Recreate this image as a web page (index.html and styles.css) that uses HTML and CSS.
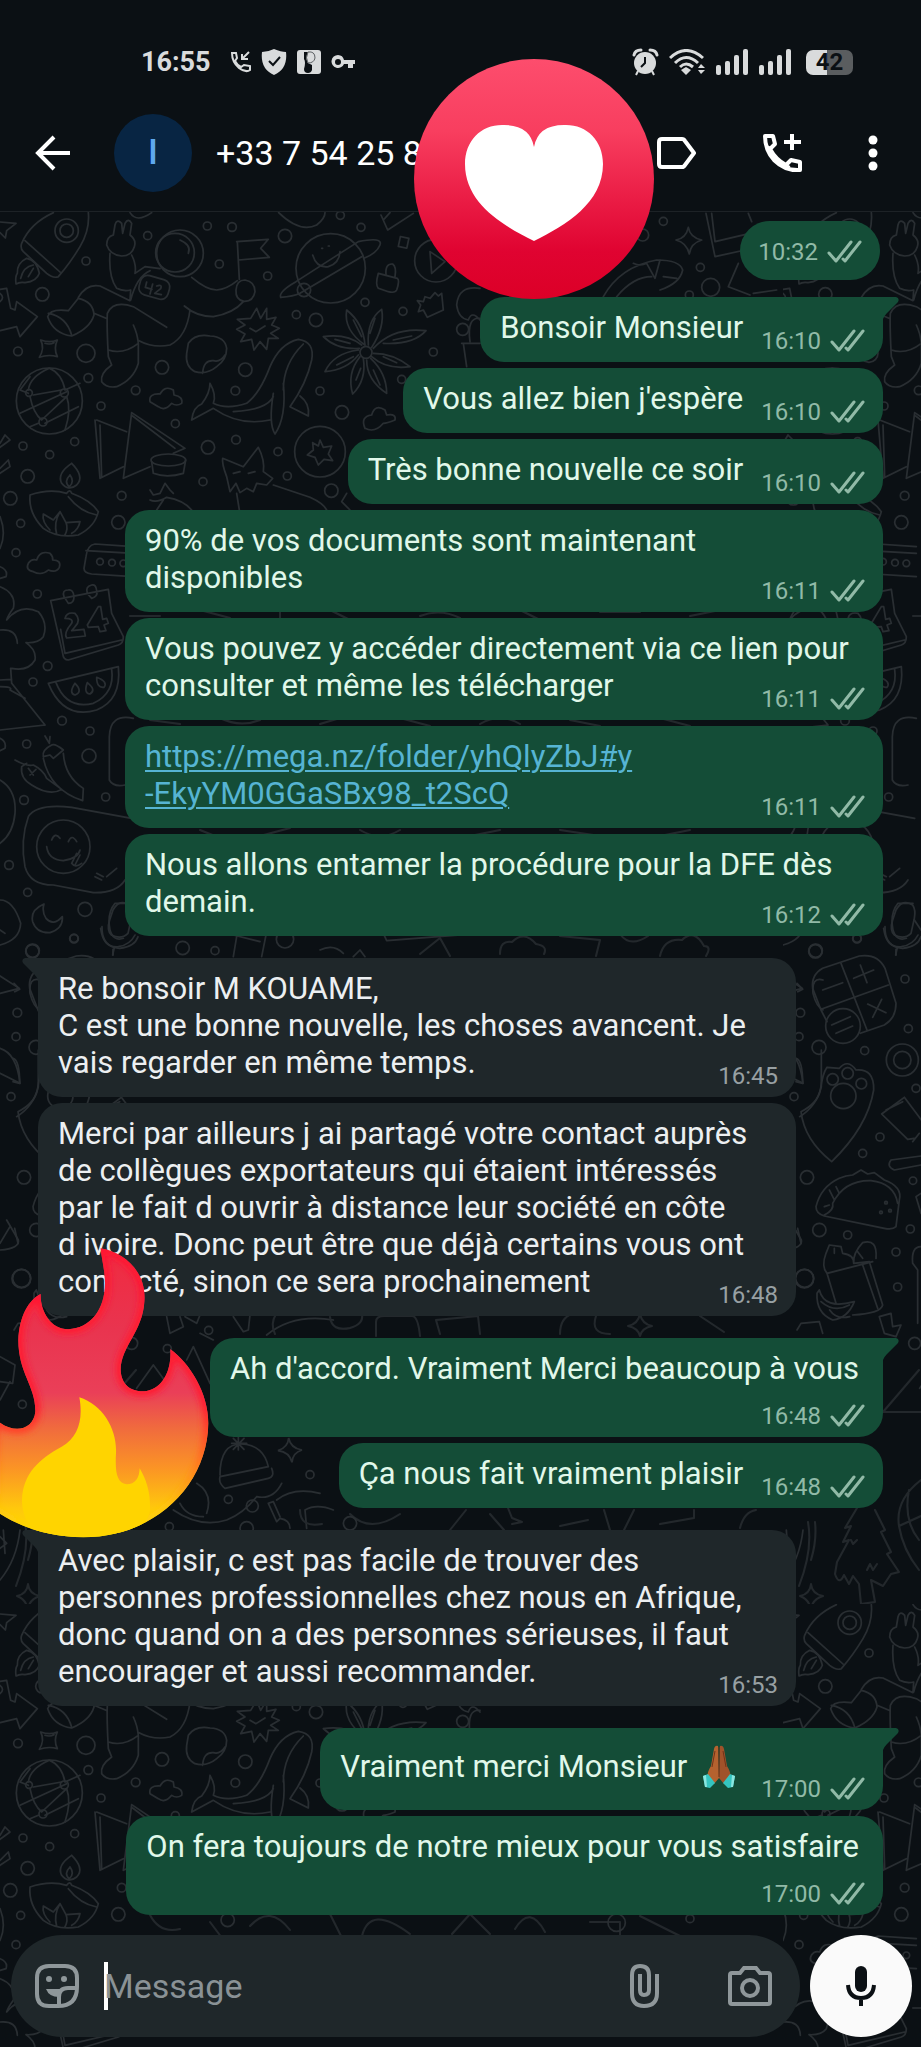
FILE: index.html
```html
<!DOCTYPE html>
<html lang="fr">
<head>
<meta charset="utf-8">
<meta name="viewport" content="width=device-width, initial-scale=1">
<title>Discussion</title>
<link rel="stylesheet" href="styles.css">
</head>
<body>
<svg class="defs" aria-hidden="true">
  <symbol id="ticks" viewBox="0 0 35 24"><path d="M2 13 9 21 24 2M16 19 18 21 33 2" fill="none" stroke="currentColor" stroke-width="3" stroke-linecap="round" stroke-linejoin="round"/></symbol>
  <symbol id="tail" viewBox="0 0 16 22"><path d="M0 0H13Q17 1 15 5L4 16Q1 19 0 22Z" fill="currentColor"/></symbol>
</svg>

<div class="statusbar">
  <div class="status-group status-left">
    <span class="clock">16:55</span>
    <svg width="20" height="22" viewBox="0 0 20 22" fill="none" stroke="currentColor" stroke-width="2"><path d="M1 2H5L6 7 4 10Q6 14 10 16L13 14 19 15V19Q15 22 8 17 1 11 1 2ZM18 1 11 8M11 3V8H17"/></svg>
    <svg width="26" height="26" viewBox="0 0 26 26"><path d="M13 0Q20 3 25 3Q27 20 13 26Q-1 20 1 3Q7 3 13 0Z" fill="currentColor"/><path d="M8 12 12 16 19 8" fill="none" stroke="#0b1014" stroke-width="2"/></svg>
    <svg width="24" height="24" viewBox="0 0 24 24"><rect width="24" height="24" rx="3" fill="currentColor"/><path d="M7 2H12Q8 8 11 13L15 15V20Q14 23 11 23 7 23 7 19 9 12 7 9Z" fill="#0b1014"/><path d="M11 2Q18 1 18 8 17 13 11 13Q8 8 11 2Z" fill="currentColor" stroke="#5c6063" stroke-width="1"/></svg>
    <svg width="24" height="16" viewBox="0 0 24 16"><path fill="currentColor" fill-rule="evenodd" d="M7 1A6.500 6.500 0 1 0 13 10H17V14H22V10H24V6H13A6.500 6.500 0 0 0 7 1ZM7 5A3 3 0 1 1 7 11 3 3 0 1 1 7 5Z"/></svg>
  </div>
  <div class="status-group status-right">
    <svg width="27" height="28" viewBox="0 0 27 28"><path d="M2 7Q3 2 9 2M18 2Q24 2 25 7" fill="none" stroke="currentColor" stroke-width="3" stroke-linecap="round"/><circle cx="13" cy="15" r="11" fill="currentColor"/><path d="M13 9V15L9 19" fill="none" stroke="#0b1014" stroke-width="2"/><path d="M6 23 4 27M20 23 22 27" stroke="currentColor" stroke-width="2"/></svg>
    <svg width="37" height="26" viewBox="0 0 37 26" fill="none" stroke="currentColor" stroke-width="3"><path d="M1 9Q17-6 34 9M6 14Q17 3 29 14M11 18Q17 12 24 18"/><path d="M17 18 22 21 17 26 12 21Z" fill="currentColor" stroke="none"/><path d="M32 15 36 19H29ZM32 25 29 21H36Z" fill="currentColor" stroke="none"/></svg>
    <svg width="33" height="26" viewBox="0 0 33 26" fill="currentColor"><rect y="16" width="5" height="10" rx="2"/><rect x="9" y="12" width="5" height="14" rx="2"/><rect x="18" y="6" width="5" height="20" rx="2"/><rect x="27" width="5" height="26" rx="2"/></svg>
    <svg width="33" height="26" viewBox="0 0 33 26" fill="currentColor"><rect y="16" width="5" height="10" rx="2"/><rect x="9" y="12" width="5" height="14" rx="2"/><rect x="18" y="6" width="5" height="20" rx="2"/><rect x="27" width="5" height="26" rx="2"/></svg>
    <span class="battery">42</span>
  </div>
</div>

<header class="topbar">
  <button class="icon-btn" aria-label="Retour"><svg width="36" height="36" viewBox="0 0 36 36" fill="none" stroke="currentColor" stroke-width="4"><path d="M19 2 3 18 19 34M3 18H35"/></svg></button>
  <span class="avatar">I</span>
  <h1 class="contact">+33 7 54 25 8</h1>
  <div class="actions">
    <button class="icon-btn" aria-label="Étiquette"><svg width="39" height="32" viewBox="0 0 39 32"><path d="M5 2H25Q27 2 28 4L37 16 28 28Q27 30 25 30H5Q2 30 2 27V5Q2 2 5 2Z" fill="none" stroke="currentColor" stroke-width="4" stroke-linejoin="round"/></svg></button>
    <button class="icon-btn" aria-label="Appeler"><svg width="42" height="42" viewBox="0 0 42 42" fill="none" stroke="currentColor" stroke-width="4"><path d="M4 4H12L14 12 9 17Q15 28 25 33L30 28 39 30V38Q24 39 13 28 4 18 4 4ZM9 17 6 15M25 33 28 36" stroke-linejoin="round"/><path d="M31 2V18M23 10H40"/></svg></button>
    <button class="icon-btn" aria-label="Plus d'options"><svg width="10" height="36" viewBox="0 0 10 36" fill="currentColor"><circle cx="5" cy="5" r="4.500"/><circle cx="5" cy="18" r="4.500"/><circle cx="5" cy="31" r="4.500"/></svg></button>
  </div>
</header>

<svg class="heart" viewBox="0 0 240 240" role="img" aria-label="Cœur">
  <defs><linearGradient id="heartFill" x1="0" y1="0" x2="0" y2="1"><stop offset="0" stop-color="#fd4d6d"/><stop offset=".3" stop-color="#f83e5f"/><stop offset=".8" stop-color="#e00331"/><stop offset="1" stop-color="#dc0027"/></linearGradient></defs>
  <circle cx="120" cy="120" r="120" fill="url(#heartFill)"/>
  <path d="M120 88Q116 66 90 66C68 65 51 81 51 105C51 144 88 166 120 182C152 166 189 144 189 105C189 81 172 65 150 66Q124 66 120 88Z" fill="#fff"/>
</svg>

<main class="chat">
  <svg class="wallpaper" aria-hidden="true">
    <defs>
      <pattern id="doodles" width="783" height="1392" patternUnits="userSpaceOnUse">
        <g fill="none" stroke="#292e32" stroke-width="5" stroke-linejoin="round" stroke-linecap="round">
          <g transform="translate(0 -2) scale(.33333)">
            <path d="M0 36 48 40 20 62 16 84 0 68"/>
            <path d="M65 100Q90 40 160 8M265 8Q270 60 240 110 210 160 175 200Q160 206 140 190L70 125Q60 115 65 100M75 92 180 186"/>
            <circle cx="200" cy="62" r="35"/><circle cx="200" cy="62" r="20"/>
            <path d="M80 145Q50 160 52 190 45 200 48 222 60 215 75 218 110 215 118 190M80 145Q110 150 118 190M62 205Q70 170 100 165M85 200 100 175"/>
            <path d="M320 105Q320 80 340 75L345 45Q350 25 365 40L368 70 375 40Q385 22 395 40L390 75Q410 90 403 110 395 138 365 138 330 135 320 105M330 130Q325 200 350 235 370 245 392 240L390 272 300 228Q260 220 235 262M395 135Q410 165 405 190L435 170 480 176M392 270Q410 200 450 182M390 8Q410 40 455 8"/>
            <circle cx="540" cy="130" r="70"/><circle cx="525" cy="128" r="58"/><path d="M540 90Q575 105 565 130"/>
            <rect x="418" y="202" width="90" height="60" rx="22" transform="rotate(16 463 232)"/>
            <path d="M440 216 436 232 456 238M458 222 450 252M470 228Q488 222 482 236L464 250 484 254"/>
            <path d="M575 202Q620 240 650 240 680 238 712 212M712 95 718 208M710 95 805 88 782 115 808 142 716 150M708 240Q710 210 735 210 765 215 765 245 760 275 732 274 706 270 708 240M553 288Q590 320 640 320 700 310 730 275M570 300Q560 380 510 405 460 415 417 392M143 320Q150 295 205 302L235 265Q280 275 282 315 270 355 215 378 160 370 143 320M145 310Q200 320 215 376M282 310 318 325M500 352 400 290Q340 270 322 310 320 350 325 440L335 465Q300 490 305 515 320 535 350 530 400 510 415 460V400Q412 370 400 345M325 420Q370 435 415 400"/>
            <path d="M0 238 20 235 32 295 45 300 50 275 112 320 60 380 50 350 0 362M0 250Q15 262 0 275"/>
            <path d="M122 390Q150 400 172 390 160 415 172 440 145 432 118 442 135 415 122 390M135 400Q150 405 162 398"/>
            <circle cx="148" cy="573" r="99"/>
            <path d="M90 500 60 540 85 550M100 555 185 540M148 475Q185 490 195 540L240 520M90 560Q100 610 125 630L200 560M60 610 200 545M148 475Q90 500 85 540M135 640 235 590M200 560Q215 600 195 660M115 640 90 650"/>
            <circle cx="87" cy="549" r="10"/><circle cx="193" cy="549" r="12"/><circle cx="129" cy="636" r="12"/>
            <path d="M285 630 300 805 370 770M290 630 380 665M300 645 305 800M395 608 370 805 450 770M395 608 555 715 520 730M398 618 525 715"/>
            <ellipse cx="505" cy="750" rx="52" ry="18"/><path d="M455 755 460 790Q500 805 550 790L557 750"/>
            <path d="M215 760Q170 790 185 820 205 845 230 825 255 800 215 760M210 795Q190 815 208 830 225 815 210 795M90 855Q150 835 200 850 210 835 215 850 270 870 295 905 285 950 235 975 170 985 130 955 85 910 90 855M205 860Q240 905 290 915M150 960Q125 935 130 912L160 930 180 905 198 938 240 935Q235 960 215 970M180 905Q160 940 170 972M198 938Q205 955 195 975"/>
            <path d="M100 1085Q75 1080 85 1060 95 1045 110 1050 120 1020 150 1030 160 1040 158 1050 185 1050 178 1072 168 1090 145 1080 125 1098 100 1085"/>
            <path d="M400 1010 285 1002Q262 1005 258 1040L252 1075Q252 1090 275 1092L400 1100M258 1022 400 1030"/><circle cx="300" cy="1055" r="10"/><circle cx="336" cy="1058" r="10"/><circle cx="370" cy="1060" r="10"/>
            <path d="M152 1172 325 1138 335 1210 370 1280 Q370 1300 355 1305L205 1350Q190 1350 188 1330L152 1172M182 1258 195 1330 365 1290M205 1140Q185 1140 192 1160L205 1180Q222 1180 222 1160 220 1138 205 1140M275 1125Q255 1130 262 1150L275 1165Q295 1160 290 1142 288 1122 275 1125"/>
            <path d="M195 1225Q200 1205 225 1210 245 1230 225 1250L215 1262 252 1258 256 1278 200 1284Q190 1270 215 1240 222 1225 195 1225M295 1190 262 1245 265 1252 295 1250 300 1265 318 1262 312 1245 325 1240 320 1225 308 1228 302 1190Z"/>
            <path d="M145 1420 355 1370Q365 1470 290 1500 190 1530 145 1420M168 1418Q200 1500 280 1480 345 1450 335 1378M225 1420Q205 1450 225 1455 250 1445 225 1420M262 1418Q250 1450 270 1452 290 1440 262 1418M290 1402Q290 1435 312 1432 325 1415 290 1402"/>
            <path d="M0 1130Q50 1150 40 1195 25 1215 20 1230 60 1180 115 1205 145 1240 130 1280 115 1300 78 1298 110 1320 105 1350 85 1385 35 1375M0 1260Q50 1255 52 1300M32 1375 35 1420 135 1545M0 1560 135 1545M0 1410 35 1408M0 1430Q40 1430 30 1440L75 1465M0 920Q20 970 0 1015M0 775 25 750 30 770 0 790M0 700 15 675 30 690 0 712M0 1070Q25 1080 18 1100L0 1105"/>
            <path d="M565 400Q585 370 630 378 675 380 680 415 680 450 650 470 620 495 585 485 555 470 560 430ZM608 490Q610 450 640 452 660 458 675 435"/>
            <path d="M752 325 770 295 782 325 800 295 800 328 828 322 815 345 838 355 812 370 835 385 805 385 800 418 780 395 762 420 755 388 722 395 735 372 710 358 735 345 712 328ZM750 355 768 365 795 348"/>
            <path d="M630 520Q650 555 640 580 680 600 740 580 780 550 810 470 840 400 895 388 945 395 935 450 920 520 870 590M575 630Q580 590 605 582 630 550 630 520M575 630 640 595M640 595Q720 650 810 630M910 402Q850 460 850 540M820 550Q805 640 825 672 860 620 850 520M870 590 925 618Q930 580 900 558M820 560Q800 600 700 605"/>
            <path d="M450 575Q445 550 480 552 495 525 520 540L522 555Q550 560 545 580 530 590 515 580 495 605 475 590Z"/>
            <circle cx="992" cy="175" r="104"/><path d="M842 262Q835 245 888 215L1075 95Q1150 80 1140 105 1130 130 1092 145M842 262Q880 260 900 250L1085 140M938 135Q950 175 985 170 1018 160 1020 125M965 115H968M985 108H988"/><circle cx="912" cy="240" r="20"/>
            <path d="M836 8Q900 70 950 45 975 25 975 8M1143 15 1163 60 1240 10M1150 30 1170 8"/>
            <rect x="1198" y="82" width="26" height="30" transform="rotate(12 1210 96)"/>
            <path d="M1135 190 1192 205Q1200 210 1190 240 1185 250 1165 245L1135 235Q1125 225 1135 190M1158 195Q1155 160 1178 162 1190 170 1185 200"/>
            <circle cx="1308" cy="152" r="64"/><path d="M1290 125 1335 155 1295 190Z"/>
            <path d="M1275 260 1290 265 1305 248 1315 258 1325 250 1330 300 1282 322 1270 300 1255 305 1262 285 1252 272 1270 275ZM1440 235Q1375 225 1370 285 1375 325 1405 330 1415 300 1440 330M1440 325Q1400 320 1410 395M1385 400H1440M1390 400 1400 470"/><circle cx="1388" cy="358" r="18"/>
            <path d="M1095 405Q1030 360 1040 300 1090 340 1095 405M1105 405Q1100 330 1145 298 1155 350 1115 412M1120 415Q1180 350 1278 362 1240 405 1150 400M1120 430Q1180 430 1230 470 1160 480 1115 440M1112 445Q1160 490 1160 550 1100 510 1100 450M1090 445Q1100 510 1058 552 1040 490 1080 440M1075 435Q1040 480 975 485 1000 430 1075 420M1078 415Q1010 420 970 380 1040 370 1085 405M1060 330 1085 380M1125 325 1110 370M1180 390 1235 378M1150 440 1190 458M1120 480 1140 525M1082 475 1068 510M1060 440 1010 465M1050 400 1005 388"/><circle cx="1098" cy="427" r="18"/>
            <circle cx="960" cy="725" r="76"/><path d="M960 690 970 712 995 708 985 732 998 752 972 748 955 765 945 742 922 735 940 720 938 698 955 708Z"/>
            <path d="M1095 655Q1080 620 1115 615 1125 580 1155 600L1160 615Q1190 610 1185 630 1160 640 1150 640 1125 670 1095 655"/>
            <path d="M690 845 680 800Q665 760 668 745L730 770 775 712Q795 750 790 785L818 805 800 825 770 820 760 845 740 835 720 848 708 820ZM710 850 718 900M820 825 930 862Q970 880 980 900M700 790 720 785M745 790 765 785"/>
            <path d="M450 840 460 855 480 850 495 820 510 840 520 850M450 870Q470 880 500 862 550 870 575 900M490 870 470 900M1040 850 1025 875 1050 900"/>
          </g>
          <g transform="translate(0 488) scale(.33333)">
            <path d="M400 55Q330 40 328 110V240Q340 262 375 255M150 110 148 130 135 108M155 135Q125 150 130 170L150 165 160 175 190 150Q165 130 155 135M190 160Q195 230 250 265L248 302Q150 270 130 175M45 180Q80 200 100 195 130 210 140 235L185 268Q150 290 95 255 60 235 65 200L80 190M85 205 100 225M90 225 108 208"/>
            <path d="M0 240Q50 270 45 340 40 400 0 430M0 115Q20 125 15 145L0 152"/>
            <path d="M395 355 215 322Q110 310 85 350 60 420 75 500 90 555 160 555L280 578Q350 580 375 540M285 530 305 540M290 520 310 530M320 530 350 505"/>
            <circle cx="190" cy="440" r="80"/><path d="M155 420Q165 395 180 415M205 425Q215 400 230 425M140 440Q145 480 190 482 235 475 240 450M215 490 230 460M225 495 240 465M215 490Q225 505 245 490"/>
            <path d="M132 612Q90 630 98 665 110 700 150 698 190 685 187 650 160 680 138 655 125 635 132 612M330 690Q320 640 345 610H390M330 690Q340 725 370 715M302 685Q310 745 355 740 390 735 405 705M343 742 338 765M0 600Q40 600 62 670 60 720 0 735M0 690 15 700M700 705 780 725M710 710 700 770M798 705 785 770M960 750Q1000 730 1030 760M660 705H720M1060 770 1080 750 1095 770M1150 700 1160 722 1440 700"/>
            <path d="M0 828 58 865 0 880M0 1045Q50 1060 60 1150L0 1120M115 1050V1160Q100 1220 50 1250M120 840Q85 830 90 880 100 920 120 930"/>
          </g>
          <g transform="translate(-2 688) scale(.33333)">
            <path d="M312 80Q310 140 365 145 410 140 420 110M345 30Q365-5 395 15 405 30 400 55L390 100Q370 120 340 105 325 90 335 60ZM345 148V165"/>
            <path d="M125 205 235 168Q290 160 312 205L345 310Q345 355 310 375L238 400M125 205Q90 225 95 265L120 330 138 365M180 190 258 390M120 328 322 255M125 270 185 248M218 235 278 210M238 195 258 248M260 312 315 338M302 298 275 352M152 375 208 350M165 400 215 378"/><circle cx="186" cy="378" r="52"/>
            <path d="M118 570Q125 520 138 502L175 505Q200 475 225 510 280 505 278 570 260 680 152 785 70 720 60 635 110 610 118 570"/><circle cx="187" cy="588" r="38"/><circle cx="155" cy="538" r="17"/><circle cx="200" cy="520" r="17"/><circle cx="241" cy="551" r="16"/>
            <circle cx="364" cy="480" r="48"/><circle cx="364" cy="480" r="26"/><path d="M370 592 302 642 380 718 400 715M370 592 425 665M315 630 365 605M395 725 415 700M420 768 330 780Q315 800 340 810L420 795"/>
            <path d="M105 920Q120 860 175 835L195 828 215 825 240 810 260 822 280 818 310 840Q365 860 355 900L345 980Q335 990 310 985L130 948Q105 940 105 920M130 945Q160 930 155 910 190 840 270 842 340 850 350 910M145 870 160 900M165 860 175 880M130 920 145 915"/><circle cx="315" cy="908" r="4"/><circle cx="300" cy="937" r="4"/><circle cx="327" cy="932" r="4"/>
            <path d="M135 1060 145 1035 180 1040 185 1060Q220 1065 218 1090L265 1085 305 1215Q300 1240 215 1245M135 1060Q120 1100 138 1120L275 1085M138 1120 165 1210M245 1095 290 1225M218 1090Q215 1060 245 1028 290 1015 285 1075M115 1170Q130 1230 220 1205 200 1255 155 1260 105 1240 108 1180ZM120 1205Q160 1240 205 1215M230 1055 245 1075M160 1045V1060"/>
            <path d="M400 60 420 90M420 880 405 890 420 940M420 1040Q390 1040 395 1090L410 1110M410 1110V1270M48 1290 60 1270 115 1265 125 1300M295 1250 330 1240 335 1280 360 1275 345 1310 310 1300ZM45 475Q65 480 65 550L45 545M48 250 65 268 50 275M50 985 60 1030"/>
          </g>
          <g transform="translate(0 1008) scale(.33333)">
            <path d="M20 0 55 60Q60 85 0 90M0 70 30 20M0 410 45 435 38 490 0 485M0 540 30 485M140 270Q160 300 200 290M500 290 510 340 550 320 540 290M555 290 590 310 600 285M700 290 730 335 745 330 750 285M800 345Q880 280 1000 300M410 505 460 435 500 490M560 420 580 380 630 490M600 340 640 360M660 765Q660 670 725 672 790 675 805 740L660 770Q655 790 675 805L805 775Q825 770 815 745M520 870Q600 925 680 900 730 880 770 830 820 840 845 790M540 850Q560 890 610 890M590 790Q640 820 620 880M805 850 830 905M805 850 820 845 840 890M830 905 840 895Q870 900 870 925M830 840Q880 800 960 820M920 925 915 870Q950 850 1000 870"/>
            <path d="M715 650V690M695 670H740M700 655 732 688M700 688 732 655"/>
            <path d="M0 950 20 970 0 985M10 930 15 1000M60 930Q50 1020 0 1080"/>
          </g>
          <g transform="translate(460 -212) scale(.33333)">
            <path d="M685 682Q690 712 725 720 692 730 688 762 680 728 648 720 678 715 685 682M738 640 765 770 855 750M755 640 765 725 870 700M865 640 875 665M835 790 805 860 870 885M430 890Q480 800 590 780 660 780 668 810 660 850 600 870M520 790Q540 800 560 790L585 835 600 780M470 890Q520 830 575 830M610 830 650 835M1110 660Q1150 620 1200 660M880 880 950 870M1210 890 1240 855 1330 890"/>
          </g>
        </g>
        <g fill="none" stroke="#23282c" stroke-width="2" stroke-linejoin="round" stroke-linecap="round">
          <g transform="translate(0 1308)">
            <path d="M74 -12 62 8 68 6 60 22 66 20 54 42 52 54Q56 66 61 55L66 64 70 56 76 64 78 84 92 82 88 60 100 66 108 54 116 52 104 34 108 32 98 12 102 10 92 -10M68 20 70 24 74 20M84 50 87 44 90 50 94 44M28 85Q35 98 44 90M25 2Q30 30 16 66M32 2Q34 20 28 40M138 -40Q112 -20 116 6 120 30 136 50M126 -30Q120 0 136 20M116 6 138 -4"/>
            <path d="M28 64Q29 74 40 76 29 79 28 90 26 79 17 76 27 74 28 64Z"/>
            <path d="M100 -108 136 -150M98 -108H138"/>
          </g>
          <path d="M150 311Q160 330 180 325M210 318 222 334M250 322Q270 300 290 326M330 310 342 334M362 332Q370 300 410 330M452 330 470 310 490 330M515 325Q530 300 545 328M590 318H620V332M640 312 680 332M130 404H160M200 398 230 406M280 400V407M330 398 350 408M420 404Q440 396 460 406M520 398 540 408M600 400H640M690 404 720 398"/>
          <path d="M150 508 180 512M220 506Q240 516 260 508M320 512 340 506M400 506 430 514M480 512Q500 500 520 512M570 508 600 514M660 506 690 514M200 618 220 626M260 624 290 616M360 618Q380 630 400 618M470 624 500 618M560 618 600 624M660 624 690 618"/>
          <path d="M500 742Q500 728 512 730 524 718 536 732 548 734 544 742M420 742 440 726 450 744M560 724 600 728 596 744M660 744Q664 726 682 728 694 716 704 734 712 734 706 744M620 722Q630 736 648 724"/>
          <path d="M275 1122Q270 1112 276 1102M330 1105Q332 1120 350 1116 364 1112 362 1102M376 1124V1110Q376 1104 384 1104H412Q418 1104 420 1124M440 1122 436 1108 478 1104 480 1122M560 1122Q560 1106 572 1102M596 1104Q590 1122 610 1122M640 1102Q642 1112 652 1114 642 1116 640 1124 638 1116 628 1114 638 1112 640 1102M700 1104 724 1120"/>
          <path d="M300 1298Q300 1316 322 1312M350 1302Q370 1322 400 1302M450 1318 466 1298M490 1302 504 1318M508 1296 512 1306 522 1310 512 1312M560 1314 588 1308M610 1318 604 1298M634 1298 624 1318M660 1312 694 1306V1298M740 1316Q744 1300 756 1298"/>
          <path d="M210 1504Q220 1520 230 1504M300 1508 306 1496M346 1498V1514Q360 1524 374 1514V1498M404 1498 400 1520M430 1500Q440 1520 460 1504"/>
        </g>
        <g fill="none" stroke="#292e32" stroke-width="5">
          <g transform="translate(0 -2) scale(.33333)">
            <circle cx="622" cy="48" r="12"/><circle cx="696" cy="51" r="13"/><circle cx="1021" cy="16" r="12"/><circle cx="1083" cy="52" r="12"/><circle cx="443" cy="77" r="12"/><circle cx="855" cy="78" r="20"/><circle cx="658" cy="162" r="12"/><circle cx="803" cy="198" r="12"/><circle cx="258" cy="153" r="12"/><circle cx="127" cy="253" r="20"/><circle cx="1095" cy="277" r="12"/><circle cx="1209" cy="304" r="12"/><circle cx="889" cy="314" r="12"/><circle cx="948" cy="330" r="20"/><circle cx="54" cy="424" r="13"/><circle cx="258" cy="430" r="27"/><circle cx="486" cy="472" r="20"/><circle cx="736" cy="479" r="20"/><circle cx="1300" cy="426" r="12"/><circle cx="265" cy="504" r="13"/><circle cx="407" cy="541" r="13"/><circle cx="706" cy="542" r="13"/><circle cx="960" cy="543" r="12"/><circle cx="1205" cy="508" r="12"/><circle cx="303" cy="588" r="12"/><circle cx="1026" cy="607" r="20"/><circle cx="526" cy="641" r="12"/><circle cx="69" cy="708" r="12"/><circle cx="224" cy="695" r="12"/><circle cx="149" cy="734" r="12"/><circle cx="624" cy="712" r="20"/><circle cx="708" cy="689" r="13"/><circle cx="834" cy="725" r="12"/><circle cx="83" cy="799" r="20"/><circle cx="609" cy="815" r="12"/><circle cx="862" cy="798" r="12"/><circle cx="994" cy="842" r="20"/><circle cx="31" cy="865" r="20"/><circle cx="365" cy="857" r="13"/><circle cx="62" cy="940" r="12"/><circle cx="355" cy="937" r="20"/><circle cx="48" cy="1028" r="12"/><circle cx="112" cy="1152" r="12"/><circle cx="143" cy="1368" r="13"/><circle cx="99" cy="1416" r="12"/><circle cx="186" cy="1532" r="13"/>
            <circle cx="683" cy="954" r="20"/><circle cx="1850" cy="962" r="26"/><circle cx="2070" cy="950" r="12"/>
          </g>
          <g transform="translate(0 488) scale(.33333)">
            <circle cx="270" cy="93" r="12"/><circle cx="80" cy="132" r="12"/><circle cx="267" cy="168" r="21"/><circle cx="72" cy="300" r="13"/><circle cx="317" cy="291" r="12"/><circle cx="27" cy="495" r="13"/><circle cx="83" cy="577" r="12"/><circle cx="255" cy="628" r="21"/><circle cx="222" cy="716" r="13"/><circle cx="98" cy="752" r="20"/><circle cx="548" cy="744" r="20"/><circle cx="645" cy="752" r="12"/><circle cx="855" cy="718" r="26"/><circle cx="52" cy="938" r="13"/><circle cx="48" cy="1010" r="12"/><circle cx="33" cy="1190" r="12"/>
          </g>
          <g transform="translate(-2 688) scale(.33333)">
            <circle cx="103" cy="154" r="20"/><circle cx="228" cy="115" r="12"/><circle cx="372" cy="237" r="12"/><circle cx="382" cy="386" r="12"/><circle cx="114" cy="442" r="21"/><circle cx="251" cy="452" r="12"/><circle cx="405" cy="565" r="12"/><circle cx="297" cy="711" r="12"/><circle cx="245" cy="760" r="12"/><circle cx="78" cy="832" r="20"/><circle cx="396" cy="842" r="11"/><circle cx="115" cy="990" r="20"/><circle cx="200" cy="1005" r="12"/><circle cx="388" cy="987" r="12"/><circle cx="345" cy="1056" r="12"/><circle cx="350" cy="1161" r="12"/><circle cx="70" cy="1136" r="28"/>
          </g>
          <g transform="translate(0 1008) scale(.33333)">
            <circle cx="626" cy="331" r="12"/><circle cx="65" cy="175" r="27"/><circle cx="502" cy="386" r="12"/><circle cx="67" cy="553" r="12"/><circle cx="930" cy="764" r="12"/><circle cx="685" cy="838" r="12"/><circle cx="757" cy="858" r="18"/><circle cx="740" cy="925" r="20"/><circle cx="508" cy="920" r="12"/><circle cx="395" cy="370" r="18"/><circle cx="1050" cy="910" r="20"/><path d="M866 654Q872 685 906 690 878 698 876 727 868 696 834 692 864 682 866 654Z"/>
          </g>
          <g transform="translate(460 -212) scale(.33333)">
            <circle cx="610" cy="664" r="12"/><circle cx="548" cy="705" r="18"/><circle cx="721" cy="802" r="12"/><circle cx="752" cy="862" r="27"/><circle cx="688" cy="885" r="12"/>
          </g>
        </g>
      </pattern>
    </defs>
    <rect width="100%" height="100%" fill="url(#doodles)"/>
  </svg>

  <div class="messages">
    <article class="bubble sent pill"><span class="meta"><time>10:32</time><svg class="ticks"><use href="#ticks"/></svg></span></article>

    <div class="group">
      <article class="bubble sent first"><svg class="tail"><use href="#tail"/></svg><p>Bonsoir Monsieur</p><span class="meta"><time>16:10</time><svg class="ticks"><use href="#ticks"/></svg></span></article>
      <article class="bubble sent"><p>Vous allez bien j'espère</p><span class="meta"><time>16:10</time><svg class="ticks"><use href="#ticks"/></svg></span></article>
      <article class="bubble sent"><p>Très bonne nouvelle ce soir</p><span class="meta"><time>16:10</time><svg class="ticks"><use href="#ticks"/></svg></span></article>
      <article class="bubble sent wide"><p>90% de vos documents sont maintenant<br>disponibles</p><span class="meta"><time>16:11</time><svg class="ticks"><use href="#ticks"/></svg></span></article>
      <article class="bubble sent wide"><p>Vous pouvez y accéder directement via ce lien pour<br>consulter et même les télécharger</p><span class="meta"><time>16:11</time><svg class="ticks"><use href="#ticks"/></svg></span></article>
      <article class="bubble sent wide"><p><a href="#lien">https://mega.nz/folder/yhQlyZbJ#y<br>-EkyYM0GGaSBx98_t2ScQ</a></p><span class="meta"><time>16:11</time><svg class="ticks"><use href="#ticks"/></svg></span></article>
      <article class="bubble sent wide"><p>Nous allons entamer la procédure pour la DFE dès<br>demain.</p><span class="meta"><time>16:12</time><svg class="ticks"><use href="#ticks"/></svg></span></article>
    </div>

    <div class="group">
      <article class="bubble received first wide"><svg class="tail"><use href="#tail"/></svg><p>Re bonsoir M KOUAME,<br>C est une bonne nouvelle, les choses avancent. Je<br>vais regarder en même temps.</p><span class="meta"><time>16:45</time></span></article>
      <article class="bubble received wide"><p>Merci par ailleurs j ai partagé votre contact auprès<br>de collègues exportateurs qui étaient intéressés<br>par le fait d ouvrir à distance leur société en côte<br>d ivoire. Donc peut être que déjà certains vous ont<br>contacté, sinon ce sera prochainement</p><span class="meta"><time>16:48</time></span></article>
    </div>

    <div class="group">
      <article class="bubble sent first stacked"><svg class="tail"><use href="#tail"/></svg><p>Ah d'accord. Vraiment Merci beaucoup à vous</p><span class="meta"><time>16:48</time><svg class="ticks"><use href="#ticks"/></svg></span></article>
      <article class="bubble sent"><p>Ça nous fait vraiment plaisir</p><span class="meta"><time>16:48</time><svg class="ticks"><use href="#ticks"/></svg></span></article>
    </div>

    <div class="group">
      <article class="bubble received first wide"><svg class="tail"><use href="#tail"/></svg><p>Avec plaisir, c est pas facile de trouver des<br>personnes professionnelles chez nous en Afrique,<br>donc quand on a des personnes sérieuses, il faut<br>encourager et aussi recommander.</p><span class="meta"><time>16:53</time></span></article>
    </div>

    <div class="group">
      <article class="bubble sent first"><svg class="tail"><use href="#tail"/></svg><p class="with-emoji">Vraiment merci Monsieur <svg class="emoji" viewBox="0 0 48 48" role="img" aria-label="Mains jointes"><path d="M23 3Q20 2 19 6L16 23Q12 29 12 36L19 41 24 35Z" fill="#b5622f"/><path d="M25 3Q28 2 29 6L32 23Q36 29 36 36L29 41 24 35Z" fill="#a0522a"/><path d="M24 4V34M20 8 17 24M28 8 31 24" stroke="#713318" stroke-width="1" fill="none"/><path d="M8 33 13 31 20 40 15 45 10 44Z" fill="#35c5c0"/><path d="M40 33 35 31 28 40 33 45 38 44Z" fill="#35c5c0"/><path d="M8 33 10 44 12 44 11 32ZM40 33 38 44 36 44 37 32Z" fill="#8be6df"/></svg></p><span class="meta"><time>17:00</time><svg class="ticks"><use href="#ticks"/></svg></span></article>
      <article class="bubble sent stacked"><p>On fera toujours de notre mieux pour vous satisfaire</p><span class="meta"><time>17:00</time><svg class="ticks"><use href="#ticks"/></svg></span></article>
    </div>
  </div>

  <svg class="flame" viewBox="0 84 630 873" role="img" aria-label="Flamme">
    <defs>
      <linearGradient id="flameFill" gradientUnits="userSpaceOnUse" x1="0" y1="85" x2="0" y2="952"><stop offset="0" stop-color="#f02a40"/><stop offset=".28" stop-color="#e9344f"/><stop offset=".5" stop-color="#ea3f58"/><stop offset=".62" stop-color="#f06a3e"/><stop offset=".76" stop-color="#fb9425"/><stop offset=".9" stop-color="#ffc80c"/><stop offset="1" stop-color="#ffdc00"/></linearGradient>
      <linearGradient id="flameEdge" gradientUnits="userSpaceOnUse" x1="0" y1="85" x2="0" y2="952"><stop offset="0" stop-color="#ff1730"/><stop offset=".55" stop-color="#ff1f30"/><stop offset=".75" stop-color="#ff7a1e"/><stop offset=".9" stop-color="#ffc60c"/><stop offset="1" stop-color="#ffdc00"/></linearGradient>
      <path id="flameShape" d="M302 85C380 100 440 160 433 245C428 335 362 380 362 450C364 500 400 518 440 513C490 503 515 450 511 388C570 430 625 520 625 610C622 800 460 952 250 952C150 950 60 925 -20 868L-20 590C30 645 100 635 106 575C108 500 55 460 55 360C58 290 85 240 122 222C120 270 150 328 205 328C270 325 315 270 315 190C315 150 305 120 302 85Z"/>
      <clipPath id="flameClip"><use href="#flameShape"/></clipPath>
      <filter id="soft" x="-20%" y="-20%" width="140%" height="140%"><feGaussianBlur stdDeviation="9"/></filter>
    </defs>
    <use href="#flameShape" fill="url(#flameFill)"/>
    <g clip-path="url(#flameClip)"><use href="#flameShape" fill="none" stroke="url(#flameEdge)" stroke-width="30" filter="url(#soft)"/></g>
    <path d="M238 532C310 555 352 630 348 700C345 755 350 790 380 793C405 793 418 775 419 745C440 780 452 820 450 870C448 900 420 925 395 930C300 958 180 955 110 932C80 915 66 880 66 840C68 760 120 715 185 680C235 650 250 600 238 532Z" fill="#ffd400" clip-path="url(#flameClip)"/>
  </svg>

  <form class="composer">
    <div class="field">
      <button type="button" class="icon-btn" aria-label="Autocollants"><svg width="44" height="44" viewBox="0 0 44 44" fill="none" stroke="currentColor" stroke-width="4"><path d="M14 2H30Q42 2 42 14V23Q42 42 23 42H14Q2 42 2 30V14Q2 2 14 2ZM42 24H33Q24 24 24 33V42"/><path d="M11 25H26L24 33Q14 33 11 25Z" fill="currentColor" stroke="none"/><circle cx="14" cy="15" r="3" fill="currentColor" stroke="none"/><circle cx="29" cy="15" r="3" fill="currentColor" stroke="none"/></svg></button>
      <span class="caret"></span>
      <input type="text" placeholder="Message" aria-label="Message">
      <button type="button" class="icon-btn" aria-label="Joindre"><svg width="30" height="44" viewBox="0 0 30 44" fill="none" stroke="currentColor" stroke-width="4"><path d="M27 10V29Q27 42 14 42 2 42 2 29V11Q2 2 10 2 19 2 19 11V26Q19 31 14 31 10 31 10 26V10"/></svg></button>
      <button type="button" class="icon-btn" aria-label="Appareil photo"><svg width="44" height="40" viewBox="0 0 44 40" fill="none" stroke="currentColor" stroke-width="4"><path d="M4 7H12L16 2H28L32 7H40Q42 7 42 9V36Q42 38 40 38H4Q2 38 2 36V9Q2 7 4 7Z"/><circle cx="22" cy="22" r="8"/></svg></button>
    </div>
    <button type="button" class="mic" aria-label="Message vocal"><svg width="30" height="42" viewBox="0 0 30 42"><rect x="9" y="1" width="12" height="26" rx="6" fill="currentColor"/><path d="M2 20Q3 33 15 33T28 20M15 33V41" fill="none" stroke="currentColor" stroke-width="4"/></svg></button>
  </form>
</main>
</body>
</html>
```
FILE: styles.css
```css
* { box-sizing: border-box; }

body {
  margin: 0;
  min-height: 100vh;
  position: relative;
  display: flex;
  flex-direction: column;
  overflow-x: hidden;
  background: #0b1014;
  color: #eceff1;
  font-family: Roboto, "Noto Sans", sans-serif;
}

svg { display: block; flex: none; }
.defs { position: absolute; width: 0; height: 0; }

button {
  padding: 0;
  border: 0;
  background: none;
  color: inherit;
  font: inherit;
}

.statusbar {
  display: flex;
  justify-content: space-between;
  height: 94px;
  padding: 44px 68px 14px 141px;
  color: #d9dbdc;
}
.status-group { display: flex; align-items: center; gap: 10px; }
.clock { margin-right: 10px; font-size: 27px; font-weight: 700; line-height: 36px; }
.battery {
  width: 47px;
  margin-left: 4px;
  border-radius: 7px;
  background: linear-gradient(90deg, #d9dbdc 44%, #5a5d5f 44%);
  color: #0b1014;
  font-size: 24px;
  font-weight: 700;
  line-height: 25px;
  text-align: center;
}

.topbar {
  display: flex;
  align-items: center;
  height: 118px;
  padding: 0 43px 0 35px;
  border-bottom: 1px solid #1d2226;
  color: #fff;
}
.avatar {
  width: 78px;
  height: 78px;
  margin: 0 24px 0 43px;
  border-radius: 50%;
  background: #082543;
  color: #5fa8ee;
  font-size: 35px;
  font-weight: 500;
  line-height: 78px;
  text-align: center;
}
.contact { flex: 1; margin: 0; font-size: 34px; font-weight: 400; line-height: 40px; }
.actions { display: flex; align-items: center; gap: 65px; }

.heart {
  position: absolute;
  top: 59px;
  left: 414px;
  z-index: 3;
  width: 240px;
}

.chat {
  position: relative;
  flex: 1;
  display: flex;
  flex-direction: column;
  padding: 9px 0 10px;
}
.wallpaper { position: absolute; inset: 0; width: 100%; height: 100%; }

.messages {
  position: relative;
  display: flex;
  flex-direction: column;
  gap: 22px;
  padding: 0 38px;
}
.group { display: flex; flex-direction: column; gap: 6px; }

.bubble {
  position: relative;
  display: flex;
  align-items: flex-end;
  gap: 18px;
  padding: 12px 18px 16px 20px;
  border-radius: 24px;
}
.bubble p { margin: 0; font-size: 31px; line-height: 37px; }
.sent { align-self: flex-end; background: #144d37; color: #e1f8ea; }
.received { align-self: flex-start; background: #1f272a; color: #eceff1; }
.sent.first { border-top-right-radius: 0; }
.received.first { border-top-left-radius: 0; }

.tail { position: absolute; top: 0; width: 16px; height: 22px; }
.sent .tail { left: 100%; color: #144d37; }
.received .tail { right: 100%; color: #1f272a; transform: scaleX(-1); }

.meta {
  display: flex;
  align-items: center;
  gap: 9px;
  margin-bottom: -9px;
  color: #98a0a3;
  font-size: 24px;
  line-height: 28px;
}
.sent .meta { color: #91baa7; }
.ticks { width: 35px; height: 24px; }

.wide { display: grid; width: calc(100% - 87px); }
.wide p, .wide .meta { grid-area: 1 / 1; }
.wide .meta { justify-self: end; align-self: end; }

.stacked { flex-direction: column; gap: 15px; }
.stacked p { margin-right: 6px; }

.pill { margin: 0 3px -5px 0; padding: 17px 18px 14px; border-radius: 30px; }
.pill .meta { margin: 0; }

.with-emoji { display: flex; align-items: center; gap: 8px; }
.bubble .with-emoji { line-height: 54px; }
.emoji { width: 48px; height: 48px; }

a { color: #56b4d3; text-underline-offset: 3px; text-decoration-thickness: 2px; }

.flame {
  position: absolute;
  top: 1036px;
  left: 0;
  width: 210px;
}

.composer {
  position: relative;
  display: flex;
  gap: 10px;
  margin-top: 20px;
  padding: 0 9px 0 11px;
}
.field {
  flex: 1;
  display: flex;
  align-items: center;
  height: 102px;
  padding: 0 28px 0 24px;
  border-radius: 51px;
  background: #1f272a;
  color: #8f979a;
}
.caret { width: 4px; height: 48px; margin: 0 -4px 0 25px; background: #fff; }
.field input {
  flex: 1;
  min-width: 0;
  padding: 0;
  border: 0;
  outline: 0;
  background: none;
  color: #eceff1;
  font: 34px/48px Roboto, "Noto Sans", sans-serif;
}
.field input::placeholder { color: #8a9296; opacity: 1; }
.field input ~ .icon-btn + .icon-btn { margin-left: 68px; }
.mic {
  display: grid;
  place-items: center;
  width: 102px;
  height: 102px;
  border-radius: 50%;
  background: #fafafa;
  color: #0b1014;
}
```
